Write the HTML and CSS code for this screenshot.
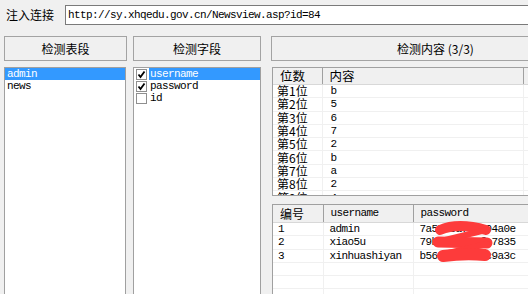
FILE: index.html
```html
<!DOCTYPE html>
<html lang="zh-CN">
<head>
    <meta charset="UTF-8">
    <title>注入检测</title>
    <link rel="stylesheet" href="styles.css">
</head>
<body>
    <div class="app">
        <div class="url-row">
            <label class="url-label" for="url">注入连接</label>
            <input class="url-input" id="url" type="text" value="http://sy.xhqedu.gov.cn/Newsview.asp?id=84">
        </div>

        <div class="main">
            <div class="col col-tables">
                <button class="btn">检测表段</button>
                <ul class="list">
                    <li class="item selected">admin</li>
                    <li class="item">news</li>
                </ul>
            </div>

            <div class="col col-fields">
                <button class="btn">检测字段</button>
                <ul class="list">
                    <li class="item check-item">
                        <span class="box checked">
                            <svg viewBox="0 0 9 9" width="9" height="9"><path d="M1.5 4.5 L3.5 7 L7.5 1.5" fill="none" stroke="#000" stroke-width="1.8"/></svg>
                        </span>
                        <span class="label selected">username</span>
                    </li>
                    <li class="item check-item">
                        <span class="box checked">
                            <svg viewBox="0 0 9 9" width="9" height="9"><path d="M1.5 4.5 L3.5 7 L7.5 1.5" fill="none" stroke="#000" stroke-width="1.8"/></svg>
                        </span>
                        <span class="label">password</span>
                    </li>
                    <li class="item check-item">
                        <span class="box"></span>
                        <span class="label">id</span>
                    </li>
                </ul>
            </div>

            <div class="col col-content">
                <button class="btn">检测内容 (3/3)</button>

                <div class="grid-panel bits-panel">
                    <table class="grid bits">
                        <colgroup>
                            <col class="c-pos">
                            <col class="c-val">
                            <col>
                        </colgroup>
                        <thead>
                            <tr><th>位数</th><th>内容</th><th></th></tr>
                        </thead>
                        <tbody>
                            <tr><td class="pos">第1位</td><td class="mono">b</td><td></td></tr>
                            <tr><td class="pos">第2位</td><td class="mono">5</td><td></td></tr>
                            <tr><td class="pos">第3位</td><td class="mono">6</td><td></td></tr>
                            <tr><td class="pos">第4位</td><td class="mono">7</td><td></td></tr>
                            <tr><td class="pos">第5位</td><td class="mono">2</td><td></td></tr>
                            <tr><td class="pos">第6位</td><td class="mono">b</td><td></td></tr>
                            <tr><td class="pos">第7位</td><td class="mono">a</td><td></td></tr>
                            <tr><td class="pos">第8位</td><td class="mono">2</td><td></td></tr>
                            <tr><td class="pos">第9位</td><td class="mono">4</td><td></td></tr>
                            <tr><td class="pos">第10位</td><td class="mono">3</td><td></td></tr>
                        </tbody>
                    </table>
                </div>

                <div class="grid-panel rows-panel">
                    <table class="grid rows">
                        <colgroup>
                            <col class="c-no">
                            <col class="c-user">
                            <col>
                        </colgroup>
                        <thead>
                            <tr><th>编号</th><th class="mono">username</th><th class="mono">password</th></tr>
                        </thead>
                        <tbody>
                            <tr><td class="mono">1</td><td class="mono">admin</td><td class="mono">7a57a5a743894a0e</td></tr>
                            <tr><td class="mono">2</td><td class="mono">xiao5u</td><td class="mono">79b4c1d2a6fe7835</td></tr>
                            <tr><td class="mono">3</td><td class="mono">xinhuashiyan</td><td class="mono">b56e0d8f3a1c9a3c</td></tr>
                            <tr><td></td><td></td><td></td></tr>
                            <tr><td></td><td></td><td></td></tr>
                            <tr><td></td><td></td><td></td></tr>
                        </tbody>
                    </table>
                    <!-- redaction scribble over the hashes -->
                    <svg class="scribble" viewBox="272 203 256 91" width="256" height="91">
                        <g fill="none" stroke="#fd3b3b" stroke-linecap="round" stroke-linejoin="round">
                            <path d="M440 229 Q458 221 486 229" stroke-width="10"/>
                            <path d="M486 229 L441 240" stroke-width="6"/>
                            <path d="M438 241 L487 242" stroke-width="11"/>
                            <path d="M487 243 L444 253" stroke-width="6"/>
                            <path d="M443 255 Q465 252 485 254" stroke-width="12"/>
                        </g>
                    </svg>
                </div>
            </div>
        </div>
    </div>
</body>
</html>
```

FILE: styles.css
```css
html,
body {
    margin: 0;
    padding: 0;
    overflow: hidden;
}

body {
    background-color: #f0f0f0;
    color: #000;
    font-family: 'Noto Sans CJK SC', sans-serif;
    font-size: 12px;
}

.app {
    width: 640px;
}

.mono {
    font-family: 'Liberation Mono', 'Noto Sans CJK SC', monospace;
    font-size: 11px;
    letter-spacing: -0.6px;
}

/* url row */
.url-row {
    display: flex;
    align-items: center;
    padding: 5px 0 0 6px;
    gap: 11px;
}

.url-label {
    line-height: 20px;
}

.url-input {
    width: 560px;
    height: 20px;
    box-sizing: border-box;
    border: 1px solid #7a7a7a;
    background: #fff;
    padding: 0 2px;
    margin: 0;
    font-family: 'Liberation Mono', monospace;
    font-size: 11px;
    letter-spacing: -0.6px;
    outline: none;
}

/* columns */
.main {
    display: flex;
    padding-left: 4px;
    margin-top: 11px;
}

.col {
    display: flex;
    flex-direction: column;
    gap: 6px;
}

.col-tables {
    width: 123px;
}

.col-fields {
    width: 128px;
    margin-left: 6px;
}

.col-content {
    width: 329px;
    margin-left: 10px;
}

.btn {
    height: 25px;
    border: 1px solid #a3a3a3;
    background-color: #f0f0f0;
    font-family: 'Noto Sans CJK SC', sans-serif;
    font-size: 12px;
    padding: 0;
    color: #000;
}

/* lists */
.list {
    list-style: none;
    margin: 0;
    padding: 0;
    height: 260px;
    background: #fff;
    border: 1px solid #a0a0a0;
}

.col-tables .list {
    width: 122px;
    box-sizing: border-box;
}

.item {
    height: 12px;
    line-height: 12px;
    padding-left: 2px;
    font-family: 'Liberation Mono', monospace;
    font-size: 11px;
    letter-spacing: -0.6px;
}

.item.selected {
    background-color: #3399ff;
    color: #fff;
}

.check-item {
    display: flex;
    align-items: center;
    padding-left: 2px;
}

.box {
    width: 11px;
    height: 11px;
    box-sizing: border-box;
    border: 1px solid #8f8f8f;
    background: #fff;
    display: flex;
    align-items: center;
    justify-content: center;
    flex-shrink: 0;
}

.check-item .label {
    flex: 1;
    margin-left: 2px;
    padding-left: 1px;
    height: 12px;
}

.check-item .label.selected {
    background-color: #3399ff;
    color: #fff;
}

/* grids */
.grid-panel {
    margin-left: 1px;
    background: #fff;
    border: 1px solid #a0a0a0;
    border-right: none;
    overflow: hidden;
}

.bits-panel {
    height: 127px;
}

.rows-panel {
    position: relative;
    margin-top: 2px;
    height: 120px;
}

.grid {
    table-layout: fixed;
    border-collapse: collapse;
    width: 100%;
}

.grid th {
    background-color: #f0f0f0;
    font-weight: normal;
    text-align: left;
    padding: 0 0 0 7px;
    border-right: 1px solid #a0a0a0;
    border-bottom: 1px solid #d8d8d8;
    white-space: nowrap;
    overflow: hidden;
}

.grid td {
    height: 12.3px;
    line-height: 12px;
    padding: 0 0 0 8px;
    border-right: 1px solid #f0f0f0;
    border-bottom: 1px solid #f0f0f0;
    white-space: nowrap;
    overflow: hidden;
}

.bits th {
    height: 16px;
    line-height: 16px;
    font-size: 12.5px;
}

.bits .c-pos {
    width: 49px;
}

.bits .c-val {
    width: 201px;
}

.bits td.pos {
    padding-left: 4px;
    font-size: 12px;
}

.rows th {
    height: 17px;
    line-height: 17px;
}

.rows th.mono {
    font-size: 11px;
}

.rows .c-no {
    width: 50px;
}

.rows .c-user {
    width: 90px;
}

.rows td {
    padding-left: 6px;
}

.rows td:first-child {
    padding-left: 5px;
}

.scribble {
    position: absolute;
    left: -1px;
    top: -1px;
}
```
